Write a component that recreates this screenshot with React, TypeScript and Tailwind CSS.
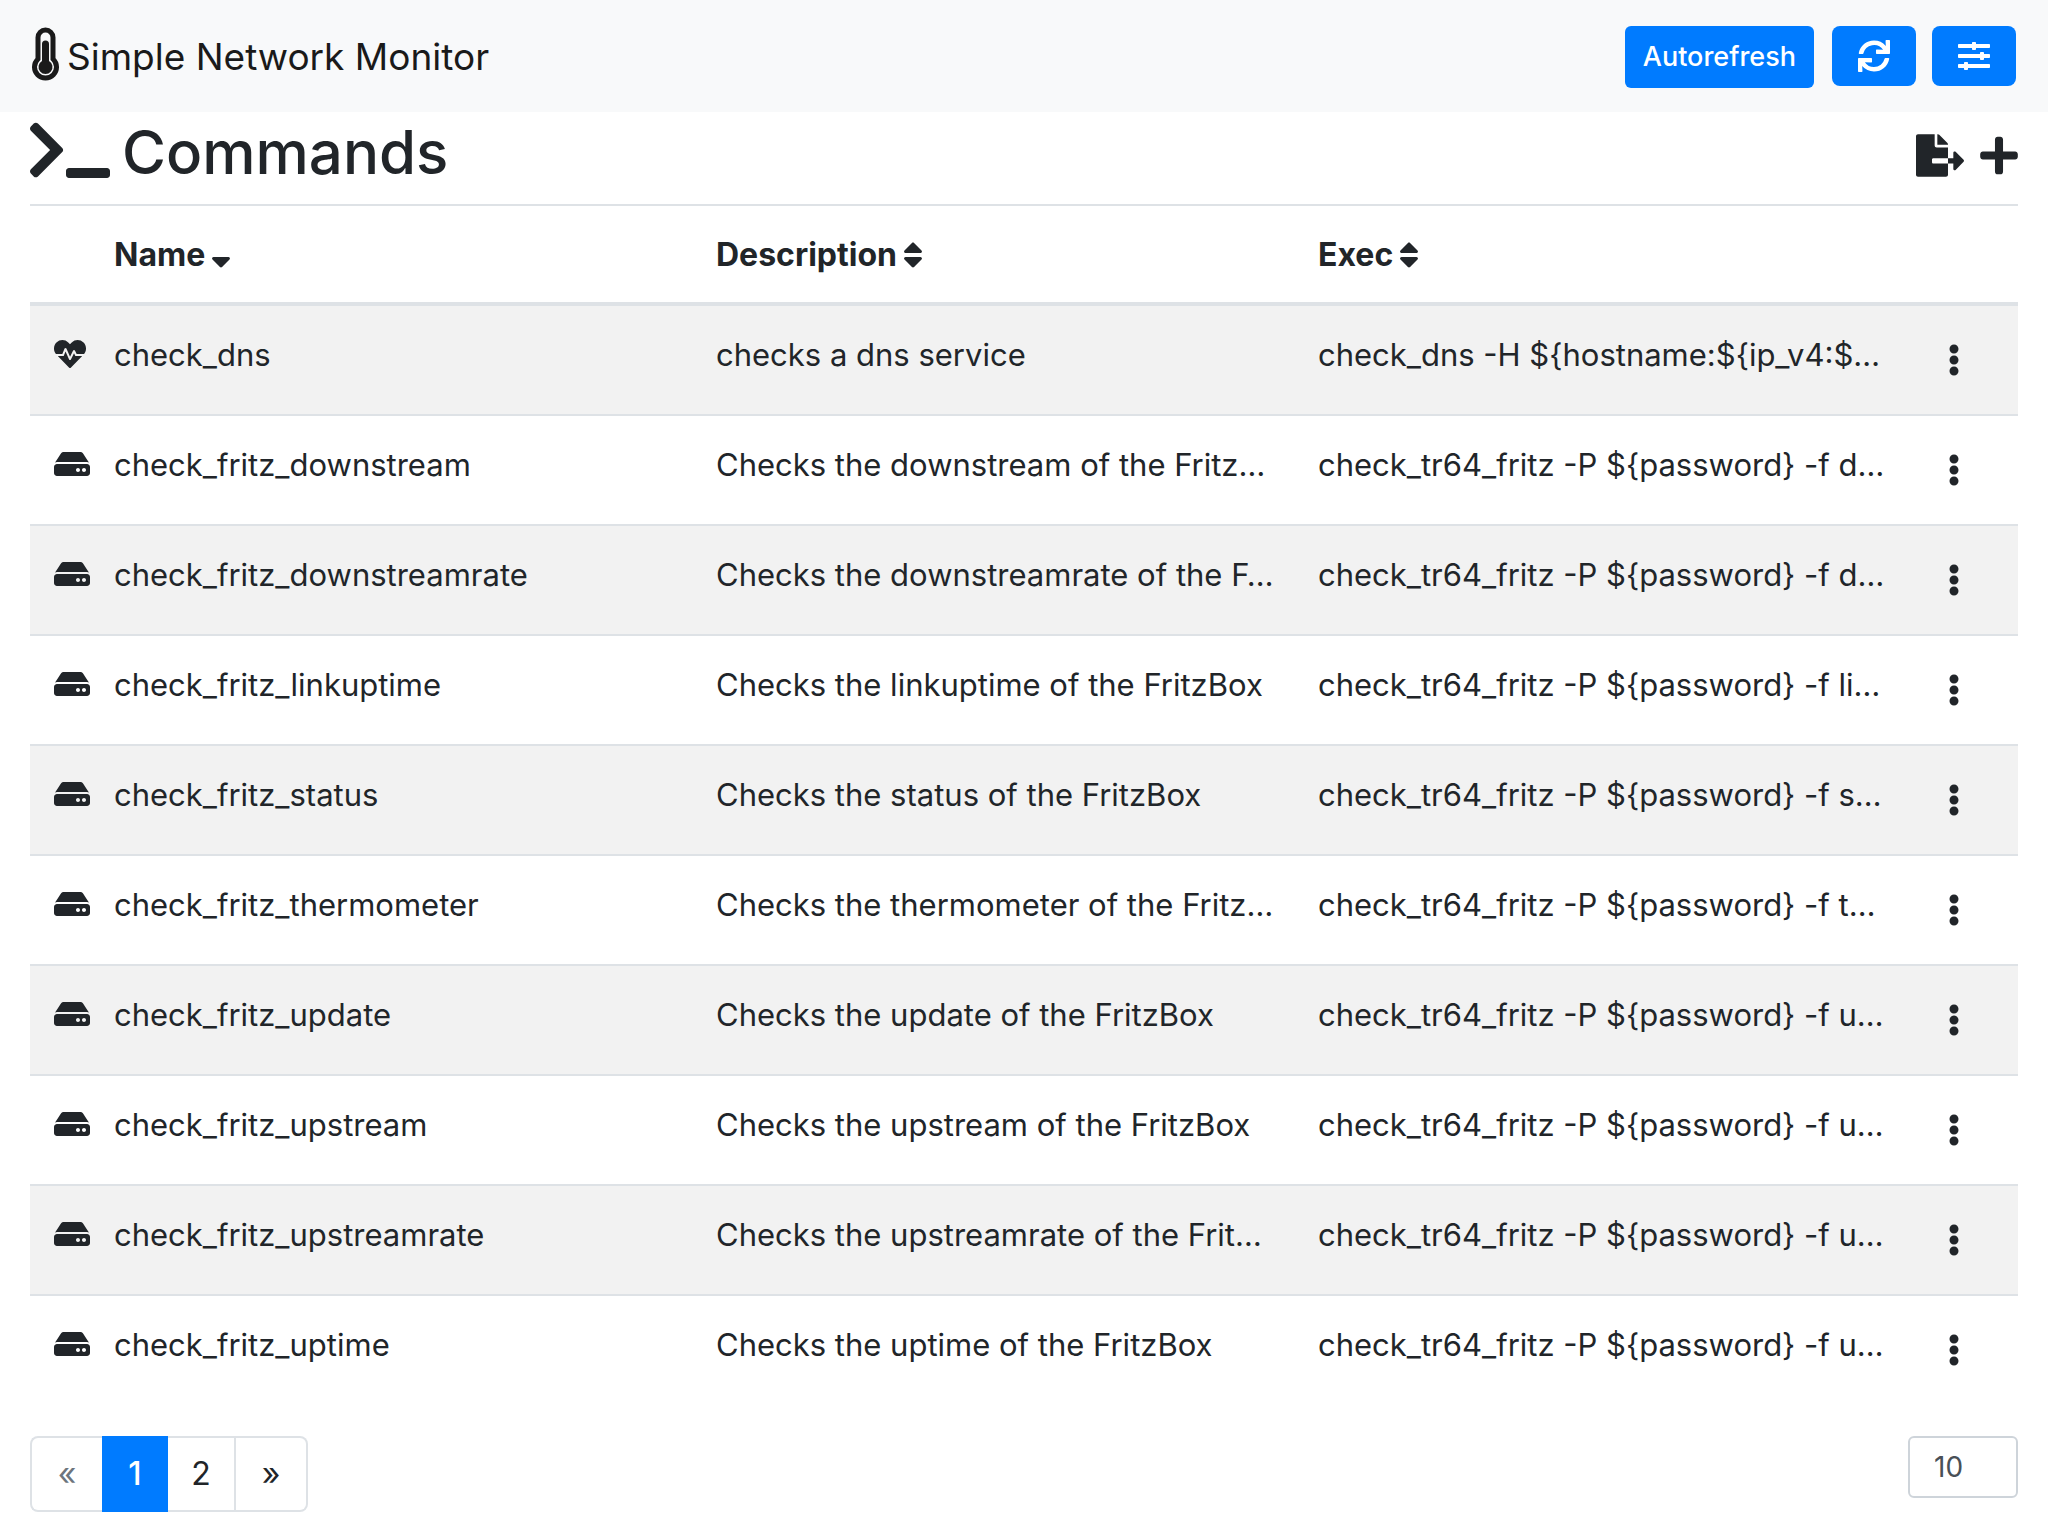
import React from "react";
import {
  FaTerminal,
  FaFileExport,
  FaPlus,
  FaSort,
  FaSortDown,
  FaHeartbeat,
  FaHdd,
  FaEllipsisV,
  FaSync,
  FaSlidersH,
} from "react-icons/fa";

type Command = {
  name: string;
  description: string;
  exec: string;
  kind: "service" | "host";
};

const commands: Command[] = [
  { kind: "service", name: "check_dns", description: "checks a dns service", exec: "check_dns -H ${hostname:${ip_v4:$…" },
  { kind: "host", name: "check_fritz_downstream", description: "Checks the downstream of the Fritz…", exec: "check_tr64_fritz -P ${password} -f d…" },
  { kind: "host", name: "check_fritz_downstreamrate", description: "Checks the downstreamrate of the F…", exec: "check_tr64_fritz -P ${password} -f d…" },
  { kind: "host", name: "check_fritz_linkuptime", description: "Checks the linkuptime of the FritzBox", exec: "check_tr64_fritz -P ${password} -f li…" },
  { kind: "host", name: "check_fritz_status", description: "Checks the status of the FritzBox", exec: "check_tr64_fritz -P ${password} -f s…" },
  { kind: "host", name: "check_fritz_thermometer", description: "Checks the thermometer of the Fritz…", exec: "check_tr64_fritz -P ${password} -f t…" },
  { kind: "host", name: "check_fritz_update", description: "Checks the update of the FritzBox", exec: "check_tr64_fritz -P ${password} -f u…" },
  { kind: "host", name: "check_fritz_upstream", description: "Checks the upstream of the FritzBox", exec: "check_tr64_fritz -P ${password} -f u…" },
  { kind: "host", name: "check_fritz_upstreamrate", description: "Checks the upstreamrate of the Frit…", exec: "check_tr64_fritz -P ${password} -f u…" },
  { kind: "host", name: "check_fritz_uptime", description: "Checks the uptime of the FritzBox", exec: "check_tr64_fritz -P ${password} -f u…" },
];

function Thermometer() {
  return (
    <svg viewBox="0 0 27 54" className="h-[54px] w-[27px] shrink-0" aria-hidden="true">
      <path
        d="M6 10.500a7.500 7.500 0 0 1 15 0V32a11 11 0 1 1-15 0Z"
        fill="none"
        stroke="#1a1a1a"
        strokeWidth="5"
      />
      <path d="M10 17a3.500 3.500 0 0 1 7 0V34a7 7 0 1 1-7 0Z" fill="#1a1a1a" />
    </svg>
  );
}

function Navbar() {
  return (
    <header className="flex items-start justify-between bg-[#f8f9fa] px-8 pt-[26px] pb-6">
      <a href="#" className="flex items-start gap-2 pt-px text-[#1a1a1a]">
        <Thermometer />
        <span className="text-[37px] leading-[60px]">Simple Network Monitor</span>
      </a>
      <div className="flex items-start gap-4">
        <button className="mr-0.5 h-[62px] rounded-md bg-[#007bff] px-[18px] text-[27px] leading-[42px] font-medium text-white">
          Autorefresh
        </button>
        <button aria-label="Refresh" className="flex h-[60px] w-[84px] items-center justify-center rounded-lg bg-[#007bff] text-white">
          <FaSync className="size-8" />
        </button>
        <button aria-label="Settings" className="flex h-[60px] w-[84px] items-center justify-center rounded-lg bg-[#007bff] text-white">
          <FaSlidersH className="size-8" />
        </button>
      </div>
    </header>
  );
}

function CommandTable() {
  return (
    <table className="w-full table-fixed border-collapse text-left text-[31px] leading-[50px]">
      <colgroup>
        <col className="w-[60px]" />
        <col />
        <col />
        <col />
        <col className="w-[122px]" />
      </colgroup>
      <thead>
        <tr className="border-t-2 border-b-4 border-[#dee2e6] text-[32px]">
          <th />
          <th className="px-6 pt-6 pb-[22px] font-bold">
            <button className="flex items-center gap-1.5">
              Name <FaSortDown className="h-8 w-5" />
            </button>
          </th>
          <th className="px-6 pt-6 pb-[22px] font-bold">
            <button className="flex items-center gap-1.5">
              Description <FaSort className="h-8 w-5" />
            </button>
          </th>
          <th className="px-6 pt-6 pb-[22px] font-bold">
            <button className="flex items-center gap-1.5">
              Exec <FaSort className="h-8 w-5" />
            </button>
          </th>
          <th />
        </tr>
      </thead>
      <tbody>
        {commands.map((c) => (
          <tr key={c.name} className="border-t-2 border-[#dee2e6] align-top odd:bg-[#f2f2f2]">
            <td className="pt-6 pl-6">
              <span className="flex h-12 items-center">
                {c.kind === "service" ? <FaHeartbeat className="h-8 w-8 shrink-0" /> : <FaHdd className="h-8 w-9 shrink-0" />}
              </span>
            </td>
            <td className="truncate px-6 pt-6">{c.name}</td>
            <td className="overflow-hidden px-6 pt-6 whitespace-nowrap">{c.description}</td>
            <td className="overflow-hidden px-6 pt-6 whitespace-nowrap">{c.exec}</td>
            <td className="py-6 pl-6">
              <button aria-label={"Actions for " + c.name} className="flex h-[60px] w-[68px] items-center justify-center">
                <FaEllipsisV className="h-8 w-3" />
              </button>
            </td>
          </tr>
        ))}
      </tbody>
    </table>
  );
}

function Pagination() {
  return (
    <nav aria-label="Pages" className="flex h-[76px] text-[32px] leading-[40px]">
      <button disabled aria-label="Previous page" className="w-[72px] rounded-l-lg border-2 border-r-0 border-[#dee2e6] text-[#6c757d]">
        «
      </button>
      <button aria-current="page" className="w-[66px] bg-[#007bff] font-medium text-white">
        1
      </button>
      <button className="w-[68px] border-2 border-l-0 border-[#dee2e6]">2</button>
      <button aria-label="Next page" className="w-[72px] rounded-r-lg border-2 border-l-0 border-[#dee2e6]">
        »
      </button>
    </nav>
  );
}

export default function App() {
  return (
    <div className="min-h-screen bg-white font-['Inter',sans-serif] text-[#212529]">
      <Navbar />
      <main className="px-[30px]">
        <div className="flex h-[92px] items-start justify-between">
          <h1 className="flex items-center gap-3 text-[60px] leading-[80px] font-medium">
            <FaTerminal className="mb-1 h-16 w-20" />
            Commands
          </h1>
          <div className="flex gap-4 pt-[22px]">
            <button aria-label="Export">
              <FaFileExport className="h-[43px] w-[48px]" />
            </button>
            <button aria-label="Add command">
              <FaPlus className="h-[43px] w-[38px]" />
            </button>
          </div>
        </div>
        <CommandTable />
        <div className="flex items-start justify-between pt-8">
          <Pagination />
          <input
            type="text"
            aria-label="Rows per page"
            defaultValue="10"
            className="h-[62px] w-[110px] rounded-md border-2 border-[#ced4da] px-6 text-[28px] text-[#495057]"
          />
        </div>
      </main>
    </div>
  );
}
